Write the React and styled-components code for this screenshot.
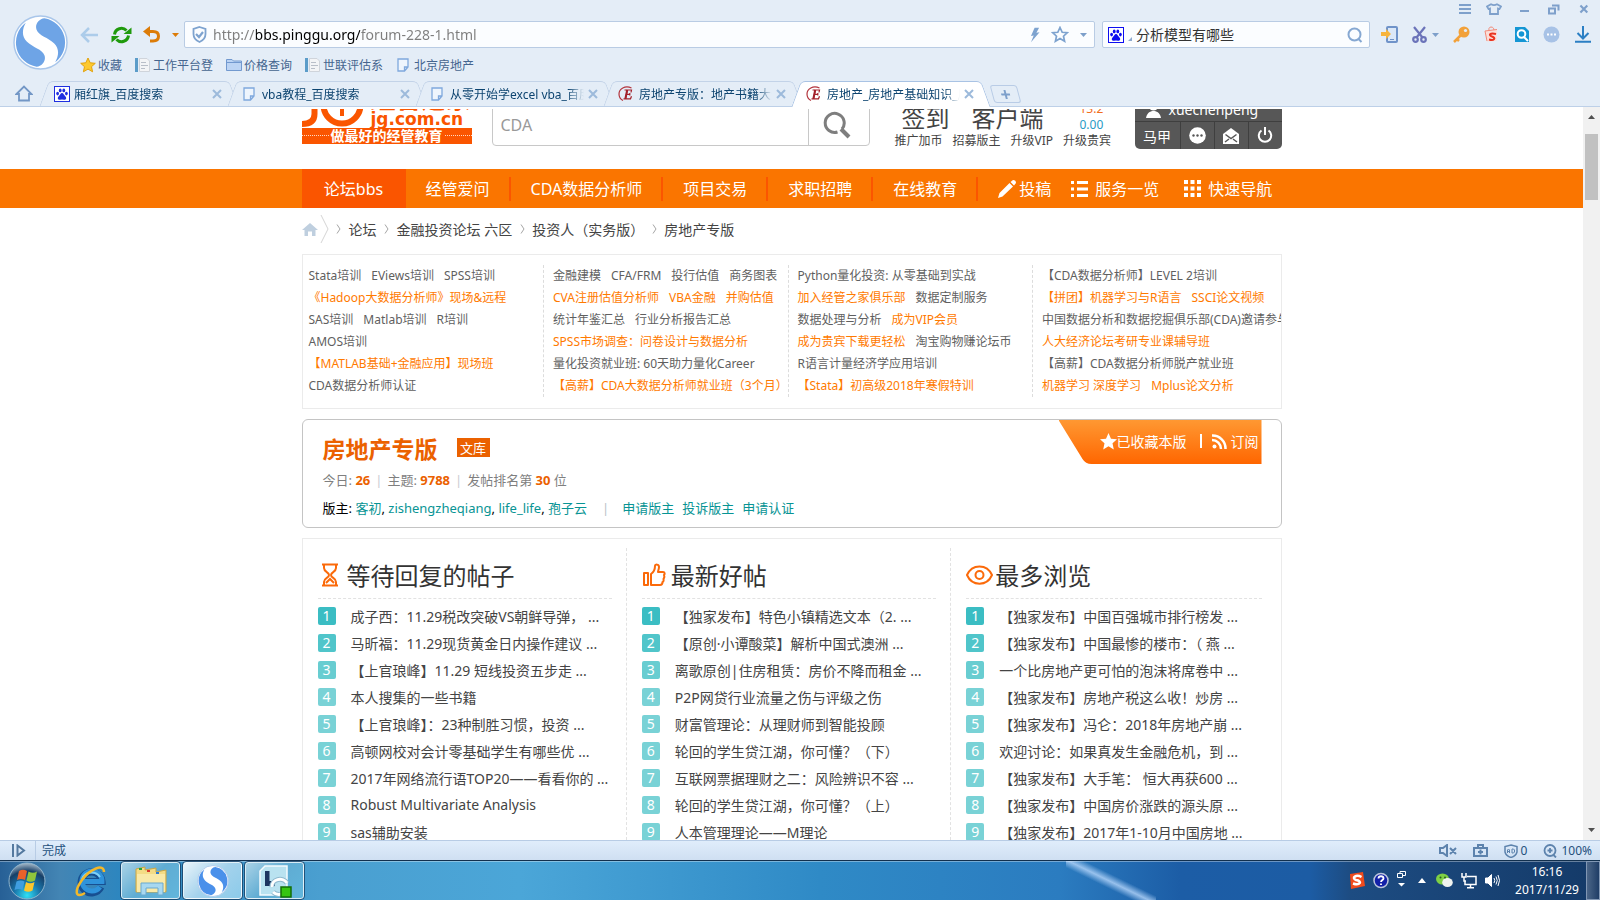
import React from "react";
import styled, { createGlobalStyle, css } from "styled-components";

const Global = createGlobalStyle`
  * { box-sizing: border-box; }
  body { margin: 0; font-family: "Noto Sans", "Noto Sans CJK SC", sans-serif; font-size: 12px; color: #444; }
  a { color: inherit; text-decoration: none; }
  button { border: 0; padding: 0; margin: 0; background: none; font: inherit; color: inherit; cursor: pointer; display: inline-flex; align-items: center; justify-content: center; }
  input { font: inherit; border: 0; padding: 0; margin: 0; outline: 0; background: none; min-width: 0; }
  ul, ol, h1, h2, p { margin: 0; padding: 0; list-style: none; font-weight: normal; }
  svg { display: block; flex: none; }
`;

/* ---------- window frame ---------- */
const Window = styled.div`
  height: 100vh;
  display: flex;
  flex-direction: column;
  overflow: hidden;
  background: #fff;
`;
const Chrome = styled.header`
  flex: none;
  display: flex;
  flex-direction: column;
  background: #e4edf7;
  border-bottom: 1px solid #bdd0e8;
  position: relative;
`;
const TitleRow = styled.div`
  height: 21px;
  display: flex;
  justify-content: flex-end;
  align-items: center;
  gap: 14px;
  padding: 0 8px 3px 0;
`;
const ChromeMain = styled.div`
  display: flex;
  padding-left: 13px;
`;
const BrandButton = styled.button`
  width: 55px;
  height: 56px;
  margin-top: -7px;
  margin-right: 12px;
`;
const ChromeRows = styled.div`
  flex: 1;
  min-width: 0;
`;
const AddressRow = styled.div`
  display: flex;
  align-items: center;
  height: 27px;
  padding-right: 8px;
`;
const NavButtons = styled.div`
  display: flex;
  align-items: center;
  width: 104px;
  gap: 11px;
`;
const Field = styled.form`
  display: flex;
  align-items: center;
  height: 27px;
  background: #fbfdff;
  border: 1px solid #b9cce4;
  border-radius: 2px;
  padding: 0 7px;
  gap: 6px;
  ${(p) => (p.$wide ? css`flex: 1; margin-right: 7px;` : css`width: 268px; padding: 0 6px 0 5px; gap: 4px; margin-right: 11px;`)}
`;
const FieldIcons = styled.span`
  display: flex;
  align-items: center;
  gap: 11px;
`;
const UrlInput = styled.input`
  flex: 1;
  font-size: 14px;
  line-height: 22px;
  color: transparent;
  background: linear-gradient(90deg, #7d7d7d 43px, #000 43px, #000 147px, #7d7d7d 147px);
  background-clip: text;
  -webkit-background-clip: text;
`;
const QueryInput = styled.input`
  flex: 1;
  font-size: 14px;
  line-height: 22px;
  color: #333;
`;
const Tools = styled.div`
  display: flex;
  align-items: center;
  justify-content: space-between;
  width: 211px;
`;
const ToolButton = styled.button`
  gap: 5px;
`;
const Bookmarks = styled.nav`
  display: flex;
  align-items: center;
  height: 33px;
  gap: 13px;
  color: #45658f;
`;
const Bookmark = styled.a`
  display: flex;
  align-items: center;
  gap: 2px;
`;
const TabBar = styled.div`
  display: flex;
  height: 25px;
`;
const HomeButton = styled.button`
  width: 22px;
  margin: 0 4px 0 13px;
`;
const Tab = styled.div`
  position: relative;
  z-index: 0;
  display: flex;
  align-items: center;
  width: 200px;
  height: 26px;
  padding: 0 17px 0 15px;
  gap: 4px;
  color: #0d4470;
  & + & { margin-left: -12px; }
  &::before, &::after {
    content: "";
    position: absolute;
    z-index: -1;
    top: 0;
    bottom: ${(p) => (p.$active ? "0" : "1px")};
    width: 51%;
    border: 1px solid ${(p) => (p.$active ? "#a9c3e4" : "#c3d3e8")};
    border-bottom: 0;
    background: ${(p) => (p.$active ? "#fff" : "#e4edf7")};
  }
  &::before { left: 5px; transform: skewX(-20deg); border-right: 0; border-top-left-radius: 5px; }
  &::after { right: 5px; transform: skewX(20deg); border-left: 0; border-top-right-radius: 5px; }
`;
const TabTitle = styled.a`
  flex: 1;
  overflow: hidden;
  white-space: nowrap;
  mask-image: linear-gradient(90deg, #000 88%, transparent);
`;
const NewTab = styled.button`
  width: 27px;
  height: 18px;
  margin: 4px 0 0 1px;
  border: 1px solid #b9cce6;
  border-radius: 3px;
  transform: skewX(15deg);
`;

/* ---------- page ---------- */
const Viewport = styled.div`
  flex: 1;
  min-height: 0;
  display: flex;
`;
const Page = styled.main`
  flex: 1;
  min-width: 0;
  overflow: hidden;
  padding-top: 2px;
`;
const Wrap = styled.div`
  width: 980px;
  max-width: 100%;
  margin: 0 auto;
`;
const SiteHeader = styled(Wrap)`
  display: flex;
  align-items: flex-end;
  height: 60px;
  padding-bottom: 20px;
  overflow: hidden;
`;
const Logo = styled.a`
  width: 170px;
  margin: 0 20px 5px 0;
  color: #fa5500;
`;
const LogoTop = styled.div`
  display: flex;
  align-items: flex-end;
  gap: 8px;
`;
const LogoWords = styled.div`
  font-size: 25px;
  line-height: 24px;
  font-weight: 900;
  white-space: nowrap;
`;
const LogoDomain = styled.div`
  font: bold 17px/18px "DejaVu Sans", sans-serif;
`;
const LogoSlogan = styled.div`
  display: flex;
  align-items: center;
  gap: 2px;
  height: 16px;
  padding-bottom: 2px;
  background: #fa5500;
  color: #fff;
  font-size: 14px;
  font-weight: bold;
  white-space: nowrap;
  &::before, &::after { content: ""; flex: 1; border-top: 1px dotted #ffd9c2; }
`;
const SiteSearch = styled.form`
  display: flex;
  width: 378px;
  height: 42px;
  margin: 0 25px 3px 0;
  border: 1px solid #c8c8c8;
  border-radius: 4px;
  input { flex: 1; padding-left: 8px; font-size: 16px; color: #888; }
  input::placeholder { color: #999; opacity: 1; }
  button { width: 61px; padding-right: 4px; border-left: 1px solid #c8c8c8; }
`;
const Quick = styled.div`
  flex: 1;
  color: #444;
  white-space: nowrap;
`;
const QuickTop = styled.div`
  display: flex;
  align-items: flex-end;
  gap: 22px;
  padding-left: 7px;
  font-size: 24px;
  line-height: 30px;
`;
const Balance = styled.div`
  margin-left: 14px;
  font-size: 12px;
  line-height: 16px;
  color: #2a9ac6;
  span { display: block; color: #f26c1c; }
`;
const QuickLinks = styled.div`
  display: flex;
  gap: 10px;
  line-height: 16px;
`;
const UserPanel = styled.div`
  width: 147px;
  background: #575757;
  color: #fff;
  border-radius: 5px;
  font-size: 14px;
`;
const UserName = styled.a`
  display: flex;
  align-items: center;
  gap: 8px;
  height: 25px;
  padding-left: 11px;
  border-bottom: 1px solid #3f3f3f;
`;
const UserActions = styled.div`
  display: flex;
  height: 27px;
  button { flex: 1; }
  button:first-child { flex: 0 0 45px; }
  button + button { border-left: 1px solid #3f3f3f; }
`;
const NavBar = styled.nav`
  background: #fa7500;
  color: #fff;
  font-size: 16px;
  white-space: nowrap;
`;
const NavInner = styled(Wrap)`
  display: flex;
  align-items: center;
  height: 39px;
`;
const NavItem = styled.a`
  display: flex;
  align-items: center;
  gap: ${(p) => (p.$gap ? p.$gap : 3)}px;
  ${(p) => p.$kind === "active" && css`align-self: stretch; width: 104px; padding-bottom: 2px; justify-content: center; background: #fa5500;`}
  ${(p) => p.$kind === "text" && css`padding: 0 19px 0 18px; border-right: 2px solid #fb5500; line-height: 24px; & + & { padding-left: 20px; }`}
  ${(p) => p.$kind === "icon" && css`padding-left: 20px; line-height: 24px;`}
`;
const Crumbs = styled(Wrap)`
  display: flex;
  align-items: center;
  height: 46px;
  padding-bottom: 4px;
  font-size: 14px;
  white-space: nowrap;
`;
const CrumbMark = styled.span`
  display: flex;
  justify-content: center;
  width: 20px;
`;
const LinkBoard = styled(Wrap)`
  display: grid;
  grid-template-columns: repeat(4, minmax(0, 1fr));
  border: 1px solid #ebebeb;
  padding: 10px 0 11px;
  margin-bottom: 10px;
`;
const LinkColumn = styled.ul`
  padding-left: 6px;
  line-height: 22px;
  overflow: hidden;
  white-space: nowrap;
  &:not(:last-child) { margin-right: 3px; border-right: 1px dashed #dcdcdc; }
  li { display: flex; gap: 10px; height: 22px; }
`;
const BoardLink = styled.a`
  color: ${(p) => (p.$hot ? "#ff7a00" : "#5f5f5f")};
`;
const ForumCard = styled(Wrap)`
  display: flex;
  justify-content: space-between;
  border: 1px solid #c4c4c4;
  border-radius: 6px;
  height: 109px;
  padding: 0 19px 0 20px;
  margin-bottom: 10px;
  font-size: 13px;
`;
const ForumTitle = styled.div`
  display: flex;
  align-items: center;
  gap: 19px;
  height: 34px;
  margin-top: 13px;
  padding-bottom: 5px;
  color: #eb6100;
  h1 { font-size: 23px; font-weight: bold; }
`;
const Badge = styled.a`
  display: flex;
  align-items: center;
  justify-content: center;
  width: 33px;
  height: 19px;
  background: #eb6100;
  color: #fff;
`;
const Stats = styled.p`
  height: 27px;
  line-height: 27px;
  color: #7f7f7f;
  b { color: #eb6100; }
  i { font-style: normal; color: #c9ccd2; margin: 0 5px; }
`;
const Moderators = styled.p`
  display: flex;
  gap: 8px;
  height: 27px;
  line-height: 28px;
  color: #000;
  a { color: #089494; }
  i { font-style: normal; color: #b9bfc9; margin: 0 5px 0 7px; }
`;
const Ribbon = styled.div`
  display: flex;
  align-items: center;
  width: 203px;
  height: 44px;
  padding: 0 0 2px 41px;
  font-size: 14px;
  color: #fff;
  white-space: nowrap;
  background: linear-gradient(#ff9832, #ff6600);
  clip-path: path("M0 0H203V44H33Q27 44 24 39Z");
  a { display: flex; align-items: center; }
  a + a { margin-left: 13px; gap: 4px; }
  a + a::before { content: ""; width: 2px; height: 14px; margin-right: 6px; background: #fff; }
`;
const Threads = styled(Wrap)`
  display: grid;
  grid-template-columns: repeat(3, minmax(0, 1fr));
  border: 1px solid #ebebeb;
  padding: 9px 5px 9px 0;
`;
const ThreadColumn = styled.section`
  padding: 11px 14px 0 15px;
  &:not(:last-child) { border-right: 1px dashed #e2e2e2; }
`;
const ThreadHeading = styled.h2`
  display: flex;
  align-items: center;
  height: 40px;
  padding-bottom: 8px;
  font-size: 24px;
  color: #333;
  border-bottom: 1px dashed #e2e2e2;
  margin-bottom: 3px;
  svg { margin-right: 2px; }
`;
const ThreadRow = styled.li`
  display: flex;
  align-items: center;
  gap: 15px;
  height: 27px;
  font-size: 14px;
  color: #444;
  white-space: nowrap;
`;
const Rank = styled.span`
  width: 18px;
  height: 18px;
  line-height: 17px;
  border-radius: 2px;
  text-align: center;
  color: #fff;
  background: ${(p) => ["#3bbdc3", "#50c5ca", "#68cdd1"][p.$n - 1] || "#79d2d6"};
`;
const ScrollTrack = styled.div`
  width: 17px;
  display: flex;
  flex-direction: column;
  align-items: center;
  background: #f1f1f1;
  button { width: 17px; height: 20px; }
  button:last-child { margin-top: auto; }
`;
const ScrollThumb = styled.div`
  width: 13px;
  height: 66px;
  margin-top: 7px;
  background: #c1c1c1;
`;

/* ---------- status bar and taskbar ---------- */
const StatusBar = styled.footer`
  flex: none;
  display: flex;
  align-items: center;
  height: 20px;
  padding: 0 8px 0 12px;
  border-top: 1px solid #b8cce5;
  background: linear-gradient(#e0edfb, #cfdff2);
  color: #24507c;
`;
const StatusText = styled.span`
  margin-left: 9px;
  padding-left: 6px;
  border-left: 1px solid #b8cce5;
  line-height: 19px;
  flex: 1;
`;
const StatusItem = styled.button`
  gap: 3px;
  margin-left: 16px;
  line-height: 17px;
`;
const Taskbar = styled.footer`
  flex: none;
  display: flex;
  align-items: stretch;
  height: 40px;
  border-top: 1px solid #12304e;
  box-shadow: inset 0 1px 0 rgba(255, 255, 255, 0.35);
  background:
    linear-gradient(26deg, transparent 30px, rgba(190, 220, 255, 0.75) 37px, transparent 44px) 1066px 0 / 90px 40px no-repeat,
    linear-gradient(90deg, #276096 0, #4385b4 60px, #2d86bf 120px, #4a9fd0 320px, #4ba6d8 520px, #2f8ac6 820px, #2b7cc0 1060px, #1c5da6 1180px, #1c5ca4 1310px, #1d4c82 1350px, #143a68 100%);
`;
const StartButton = styled.button`
  width: 54px;
`;
const TaskIcon = styled.button`
  width: 72px;
  margin-right: -5px;
`;
const TaskButton = styled.button`
  width: 59px;
  margin: 1px 3px 1px 0;
  border: 1px solid rgba(255, 255, 255, 0.75);
  border-radius: 3px;
  outline: 1px solid rgba(15, 50, 85, 0.7);
  background: ${(p) => (p.$active ? "linear-gradient(135deg, #e9f4fb, #a4d2ec 50%, #8ccbea)" : "linear-gradient(135deg, #a9d2e6, #5facd3 50%, #62b6dc)")};
`;
const Tray = styled.div`
  display: flex;
  align-items: center;
  gap: 8px;
  margin-left: auto;
  color: #fff;
`;
const Clock = styled.time`
  width: 78px;
  text-align: center;
  font-size: 12px;
  line-height: 18px;
`;
const PeekButton = styled.button`
  width: 14px;
  border: 1px solid #8197b4;
  background: linear-gradient(90deg, #4b6688, #1f3d66);
`;

/* ---------- icons ---------- */
const line = { fill: "none", stroke: "currentColor", strokeWidth: 2 };

const SwirlLogo = ({ size, blue }) => (
  <svg width={size} height={size} viewBox="-28 -28 56 56">
    <circle r="27" fill="#fff" stroke="#a9c6ea" strokeWidth="1.5" />
    <circle r="25" fill="#fff" />
    {[0, 180].map((a) => (
      <path key={a} transform={`rotate(${a})`} fill={blue} d="M4-24.700C-2-24-6-18-4-13C-2-7 8-5 14 1C19 6 19 13 15 20A25 25 0 0 0 4-24.700Z" />
    ))}
  </svg>
);
const Paw = ({ c = "#1f2fe0" }) => (
  <svg width="16" height="16" viewBox="0 0 16 16">
    <rect x=".5" y=".5" width="15" height="15" fill="#fff" stroke={c} />
    <g fill={c}>
      <ellipse cx="3.6" cy="7.6" rx="1.4" ry="1.8" /><ellipse cx="6.2" cy="4.4" rx="1.4" ry="1.9" />
      <ellipse cx="9.8" cy="4.4" rx="1.4" ry="1.9" /><ellipse cx="12.4" cy="7.6" rx="1.4" ry="1.8" />
      <path d="M8 7C6.600 7 6 9 4.700 10.200C3 12 4 14 6 13.700Q8 13.200 10 13.700C12 14 13 12 11.300 10.200C10 9 9.400 7 8 7Z" />
    </g>
  </svg>
);
const PageIcon = () => (
  <svg width="16" height="16" viewBox="-1 0 16 16" fill="#eef5fd" stroke="#7fa8dd" strokeWidth="1.3"><path d="M1 2H11V10L7.500 14H1ZM11 10H7.500V14" /></svg>
);
const DocIcon = () => (
  <svg width="16" height="16" viewBox="0 0 16 16"><path fill="#f3f4f6" stroke="#cfd4db" d="M4.500 1.500H12L14.500 4V14.500H4.500Z" /><path fill="#5b9cc9" d="M0 1H3V15H0Z" /><path stroke="#b8bec8" d="M6 5.500H11M6 8.500H13M6 11.500H10" /></svg>
);
const FolderIcon = () => (
  <svg width="16" height="14" viewBox="0 0 16 14" fill="#bcd4f4" stroke="#7299cf"><path d="M.5 12.500V1.500H6L7.500 3H15.500V12.500ZM.5 4.500H15" /></svg>
);
const StarIcon = () => (
  <svg width="16" height="16" viewBox="0 0 16 16"><path fill="#fdc92e" stroke="#e2a20d" d="M8 1L10.200 5.800L15.300 6.300L11.500 9.700L12.600 14.800L8 12.100L3.400 14.800L4.500 9.700L.7 6.300L5.800 5.800Z" /></svg>
);
const EIcon = () => (
  <svg width="17" height="16" viewBox="0 0 17 16"><path d="M13.500 2C7-1 1 3 1 8Q1 12.500 5 14.500" fill="none" stroke="#b3343c" strokeWidth="1.2" /><path d="M6.500 4H13.500L13 6.500M5.500 12.800H12.500L13.500 10.300M9.300 4L7.500 12.800M8.500 8.300H11.500M11.800 7V9.600" fill="none" stroke="#a3202a" strokeWidth="1.200" /><path d="M9.200 4L7.400 12.800" stroke="#a3202a" strokeWidth="2" /></svg>
);
const CloseIcon = ({ c = "#9dbadb" }) => (
  <svg width="10" height="10" viewBox="0 0 10 10" stroke={c} strokeWidth="2"><path d="M1 1L9 9M9 1L1 9" /></svg>
);
const Caret = ({ c = "#7d9fca" }) => <svg width="7" height="4" viewBox="0 0 7 4"><path fill={c} d="M0 0H7L3.500 4Z" /></svg>;

/* ---------- data ---------- */
const bookmarks = [[StarIcon, "收藏"], [DocIcon, "工作平台登"], [FolderIcon, "价格查询"], [DocIcon, "世联评估系"], [PageIcon, "北京房地产"]];
const tabs = [[Paw, "厢红旗_百度搜索"], [PageIcon, "vba教程_百度搜索"], [PageIcon, "从零开始学excel vba_百度搜索"], [EIcon, "房地产专版：地产书籍大全"], [EIcon, "房地产_房地产基础知识_房"]];
const navItems = ["经管爱问", "CDA数据分析师", "项目交易", "求职招聘", "在线教育"];
/* a leading asterisk marks a highlighted link */
const board = [
  [["Stata培训", "EViews培训", "SPSS培训"], ["*《Hadoop大数据分析师》现场&远程"], ["SAS培训", "Matlab培训", "R培训"], ["AMOS培训"], ["*【MATLAB基础+金融应用】现场班"], ["CDA数据分析师认证"]],
  [["金融建模", "CFA/FRM", "投行估值", "商务图表"], ["*CVA注册估值分析师", "*VBA金融", "*并购估值"], ["统计年鉴汇总", "行业分析报告汇总"], ["*SPSS市场调查：问卷设计与数据分析"], ["量化投资就业班: 60天助力量化Career"], ["*【高薪】CDA大数据分析师就业班（3个月）"]],
  [["Python量化投资: 从零基础到实战"], ["*加入经管之家俱乐部", "数据定制服务"], ["数据处理与分析", "*成为VIP会员"], ["*成为贵宾下载更轻松", "淘宝购物赚论坛币"], ["R语言计量经济学应用培训"], ["*【Stata】初高级2018年寒假特训"]],
  [["【CDA数据分析师】LEVEL 2培训"], ["*【拼团】机器学习与R语言", "*SSCI论文视频"], ["中国数据分析和数据挖掘俱乐部(CDA)邀请参与"], ["*人大经济论坛考研专业课辅导班"], ["【高薪】CDA数据分析师脱产就业班"], ["*机器学习 深度学习", "*Mplus论文分析"]],
];
const Hourglass = () => (
  <svg width="27" height="24" viewBox="0 0 27 24" fill="none" stroke="#fb6a0a" strokeWidth="2"><path d="M4 1.500H20M4 22.500H20M6 2V5C6 9 11 9 11 12S6 15 6 19V22M18 2V5C18 9 13 9 13 12S18 15 18 19V22M8 20L12 16L16 20" /></svg>
);
const Thumb = () => (
  <svg width="27" height="24" viewBox="0 0 27 24" fill="none" stroke="#fb6a0a" strokeWidth="2" strokeLinejoin="round"><path d="M2 10H6V22H2ZM9 11C12 9 13 6 13 3C13 1 17 1 17 4C17 6 16 8 16 9H21C23 9 23 11 22 12C23 14 22 15 21.500 16C22 18 21 19 20.500 19C20.500 21 20 22 18 22H9Z" /></svg>
);
const Eye = () => (
  <svg width="27" height="24" viewBox="0 0 27 24" fill="none" stroke="#fb6a0a" strokeWidth="2"><path d="M1 12C6 .5 21 .5 26 12C21 23.500 6 23.500 1 12Z" /><circle cx="13.500" cy="12" r="4" /></svg>
);
const threads = [
  [Hourglass, "等待回复的帖子", ["成子西：11.29税改突破VS朝鲜导弹， ...", "马昕福：11.29现货黄金日内操作建议 ...", "【上官琅峰】11.29 短线投资五步走 ...", "本人搜集的一些书籍", "【上官琅峰】：23种制胜习惯，投资 ...", "高顿网校对会计零基础学生有哪些优 ...", "2017年网络流行语TOP20——看看你的 ...", "Robust Multivariate Analysis", "sas辅助安装"]],
  [Thumb, "最新好帖", ["【独家发布】特色小镇精选文本（2. ...", "【原创·小谭酸菜】解析中国式澳洲 ...", "离歌原创|住房租赁：房价不降而租金 ...", "P2P网贷行业流量之伤与评级之伤", "财富管理论：从理财师到智能投顾", "轮回的学生贷江湖，你可懂？（下）", "互联网票据理财之二：风险辨识不容 ...", "轮回的学生贷江湖，你可懂？（上）", "人本管理理论——M理论"]],
  [Eye, "最多浏览", ["【独家发布】中国百强城市排行榜发 ...", "【独家发布】中国最惨的楼市：（ 燕 ...", "一个比房地产更可怕的泡沫将席卷中 ...", "【独家发布】房地产税这么收！炒房 ...", "【独家发布】冯仑：2018年房地产崩 ...", "欢迎讨论：如果真发生金融危机，到 ...", "【独家发布】大手笔： 恒大再获600 ...", "【独家发布】中国房价涨跌的源头原 ...", "【独家发布】2017年1-10月中国房地 ..."]],
];

function BrowserChrome() {
  return (
    <Chrome>
      <TitleRow>
        <button aria-label="菜单"><svg width="14" height="12" viewBox="0 0 14 12" stroke="#7ea0cb" strokeWidth="2"><path d="M1 2H13M1 6H13M1 10H13" /></svg></button>
        <button aria-label="皮肤"><svg width="16" height="12" viewBox="0 0 16 12" fill="none" stroke="#7ea0cb" strokeWidth="1.8"><path d="M5 1.200Q8 3 11 1.200L15 3.500L13.500 6L12 5.500V11H4V5.500L2.500 6L1 3.500Z" /></svg></button>
        <button aria-label="最小化"><svg width="18" height="12" viewBox="0 0 18 12" stroke="#7ea0cb" strokeWidth="2"><path d="M4 8H13" /></svg></button>
        <button aria-label="还原"><svg width="12" height="12" viewBox="0 0 12 12" fill="none" stroke="#7ea0cb" strokeWidth="2"><path d="M1 5.500H7V10.500H1ZM4 2.500H10.500V7.500" /></svg></button>
        <button aria-label="关闭"><svg width="18" height="12" viewBox="-6 -2 18 14" stroke="#7ea0cb" strokeWidth="2.500"><path d="M0 1L8 9M8 1L0 9" /></svg></button>
      </TitleRow>
      <ChromeMain>
        <BrandButton aria-label="浏览器"><SwirlLogo size={55} blue="#6ea4e6" /></BrandButton>
        <ChromeRows>
          <AddressRow>
            <NavButtons>
              <button aria-label="后退"><svg width="20" height="18" viewBox="0 0 20 18" fill="none" stroke="#acccea" strokeWidth="2.500"><path d="M9 2L2 9L9 16M2 9H18" /></svg></button>
              <button aria-label="刷新"><svg width="21" height="20" viewBox="0 0 21 20"><path d="M3.500 9.500A7 7 0 0 1 15.500 5.500M17.500 10.500A7 7 0 0 1 5.500 14.500" fill="none" stroke="#1f9a0c" strokeWidth="3" /><path fill="#1f9a0c" d="M12.500 9H20.500V2.500ZM8.500 11H.5V17.500Z" /></svg></button>
              <button aria-label="撤销"><svg width="18" height="18" viewBox="0 0 18 18"><path d="M5 5.500H10Q15.500 5.500 15.500 10.200T10 15H7" fill="none" stroke="#dc7c08" strokeWidth="3" /><path fill="#dc7c08" d="M7 0V11L0 5.500Z" /></svg></button>
              <Caret c="#dc7c08" />
            </NavButtons>
            <Field $wide>
              <svg width="15" height="17" viewBox="0 0 15 17" fill="none" stroke="#7ea3cf" strokeWidth="1.800"><path d="M7.500 1L13.500 3V8C13.500 12 11 14.500 7.500 16C4 14.500 1.500 12 1.500 8V3Z" /><path d="M4 8L7 11L11 6" strokeWidth="2.200" /></svg>
              <UrlInput aria-label="地址" defaultValue="http://bbs.pinggu.org/forum-228-1.html" />
              <FieldIcons>
                <svg width="9" height="16" viewBox="1 0 10 16" fill="#7ea3cf"><path d="M5 0H10L7 5.500L10.500 5L1 16L4 8.500L1 9Z" /></svg>
                <svg width="18" height="17" viewBox="0 0 18 17" fill="none" stroke="#7ea3cf" strokeWidth="1.700"><path d="M9 1.500L11.200 6.300L16.300 6.700L12.500 10.200L13.600 15.300L9 12.600L4.400 15.300L5.500 10.200L1.700 6.700L6.800 6.300Z" /></svg>
                <Caret />
              </FieldIcons>
            </Field>
            <Field>
              <Paw c="#0d0df0" />
              <svg width="4" height="12" viewBox="0 0 4 12"><path fill="#8da9cf" d="M4 8V12H0Z" /></svg>
              <QueryInput aria-label="搜索" defaultValue="分析模型有哪些" />
              <svg width="16" height="16" viewBox="0 0 16 16" fill="none" stroke="#86a8d2" strokeWidth="2"><circle cx="7.500" cy="7.500" r="6" /><path d="M11.500 12L14.500 15" /></svg>
            </Field>
            <Tools>
              <ToolButton aria-label="手机"><svg width="17" height="17" viewBox="0 0 17 17"><rect x="6" y="1" width="10" height="15" rx="1" fill="#dbe8f8" stroke="#6f93c9" strokeWidth="2" /><path d="M9 13.500H13" stroke="#6f93c9" /><path fill="#f7b43c" d="M0 6H5V3L10 8L5 13V10H0Z" /></svg></ToolButton>
              <ToolButton aria-label="截图"><svg width="15" height="17" viewBox="0 0 15 17" fill="none" stroke="#6b73b9" strokeWidth="2.200"><path d="M2 1L10.500 11.500M13 1L4.500 11.500" /><circle cx="3.500" cy="13.500" r="2.300" /><circle cx="11.500" cy="13.500" r="2.300" /></svg><Caret /></ToolButton>
              <ToolButton aria-label="密码"><svg width="17" height="17" viewBox="0 0 17 17"><circle cx="11" cy="6" r="5.500" fill="#f2a13a" /><circle cx="12.500" cy="4.500" r="1.600" fill="#e4edf7" /><path d="M8 9L1 16M4 13L6 15" stroke="#f2a13a" strokeWidth="2.500" /></svg></ToolButton>
              <ToolButton aria-label="购物"><svg width="15" height="17" viewBox="0 0 15 17" fill="none" stroke="#f28a78"><path d="M5 4C4 0 10 0 10 4" /><path fill="#fbded8" stroke="none" d="M1 5L13 3.500L12.500 15L3 15.500Z" /><path d="M1 5L13 3.500M1 5L3 15" /><path d="M12 8C6 6.500 4 9 8 10.500C12.500 12 10 15 5 13.500" stroke="#ea3420" strokeWidth="2" /></svg></ToolButton>
              <ToolButton aria-label="识图"><svg width="15" height="17" viewBox="0 0 15 17"><path fill="#1496d4" d="M1 1H11L15 5V16H1Z" /><circle cx="7.500" cy="8" r="3.800" fill="none" stroke="#fff" strokeWidth="2" /><path d="M10 11L14 15" stroke="#fff" strokeWidth="2" /></svg></ToolButton>
              <ToolButton aria-label="更多"><svg width="17" height="17" viewBox="0 0 17 17"><circle cx="8.500" cy="8.500" r="8" fill="#a7c2e6" /><path d="M4 8.500H6M7.500 8.500H9.500M11 8.500H13" stroke="#fff" strokeWidth="2" /></svg></ToolButton>
              <ToolButton aria-label="下载"><svg width="18" height="17" viewBox="0 0 18 17" fill="none" stroke="#2b7fc4" strokeWidth="2"><path d="M9 0V12M3.500 7L9 12.500L14.500 7M1 15.800H17" /></svg></ToolButton>
            </Tools>
          </AddressRow>
          <Bookmarks>
            {bookmarks.map(([Icon, label], i) => <Bookmark key={i} href="#"><Icon />{label}</Bookmark>)}
          </Bookmarks>
        </ChromeRows>
      </ChromeMain>
      <TabBar>
        <HomeButton aria-label="主页"><svg width="18" height="17" viewBox="0 0 18 17" fill="none" stroke="#7397c6" strokeWidth="1.800"><path d="M1.500 9L9 1.500L16.500 9H14V15.500H4V9Z" /></svg></HomeButton>
        {tabs.map(([Icon, title], i) => (
          <Tab key={i} $active={i === 4}><Icon /><TabTitle href="#">{title}</TabTitle><button aria-label="关闭标签"><CloseIcon /></button></Tab>
        ))}
        <NewTab aria-label="新标签"><svg width="9" height="9" viewBox="0 0 9 9" stroke="#7ea0cb" strokeWidth="2"><path d="M4.500 0V9M0 4.500H9" /></svg></NewTab>
      </TabBar>
    </Chrome>
  );
}

function Header() {
  return (
    <SiteHeader as="header">
      <Logo href="#">
        <LogoTop>
          <svg width="61" height="42" viewBox="0 0 61 42" fill="none" stroke="#fa5500" strokeWidth="6"><path d="M12.500 0V28Q12.500 38 0 38" /><circle cx="40" cy="19" r="18.500" /><path d="M40 8V30M29 19H51" strokeWidth="4" /></svg>
          <div><LogoWords>经管之家</LogoWords><LogoDomain>jg.com.cn</LogoDomain></div>
        </LogoTop>
        <LogoSlogan>做最好的经管教育</LogoSlogan>
      </Logo>
      <SiteSearch>
        <input aria-label="站内搜索" placeholder="CDA" />
        <button aria-label="搜索"><svg width="28" height="28" viewBox="0 0 28 28" fill="none" stroke="#7e7e7e" strokeWidth="3"><path d="M14.500 21A9.500 9.500 0 1 1 19 18" /><path d="M18 18L26 26" strokeWidth="4" /></svg></button>
      </SiteSearch>
      <Quick>
        <QuickTop><a href="#">签到</a><a href="#">客户端</a><Balance><span>13.2</span>0.00</Balance></QuickTop>
        <QuickLinks><a href="#">推广加币</a><a href="#">招募版主</a><a href="#">升级VIP</a><a href="#">升级贵宾</a></QuickLinks>
      </Quick>
      <UserPanel>
        <UserName href="#"><svg width="15" height="18" viewBox="0 0 15 18" fill="#fff"><circle cx="7.500" cy="6" r="4.500" /><path d="M0 18C1 12 5 11 7.500 11S14 12 15 18Z" /></svg>xuechenpeng</UserName>
        <UserActions>
          <button>马甲</button>
          <button aria-label="消息"><svg width="17" height="17" viewBox="0 0 17 17"><circle cx="8.500" cy="8.500" r="8.300" fill="#fff" /><g fill="#575757"><circle cx="4.500" cy="8.500" r="1.200" /><circle cx="8.500" cy="8.500" r="1.200" /><circle cx="12.500" cy="8.500" r="1.200" /></g></svg></button>
          <button aria-label="邮件"><svg width="16" height="16" viewBox="0 0 16 16"><path fill="#fff" d="M0 6L8 0L16 6V16H0Z" /><path d="M2.500 6.500L8 10.500L13.500 6.500M2 14L6 11M14 14L10 11" fill="none" stroke="#575757" strokeWidth="1.500" /></svg></button>
          <button aria-label="退出"><svg width="16" height="17" viewBox="0 0 16 17" {...line}><path d="M4.500 3.500A6.200 6.200 0 1 0 11.500 3.500M8 0V8" /></svg></button>
        </UserActions>
      </UserPanel>
    </SiteHeader>
  );
}

function ForumPage() {
  return (
    <Page>
      <Header />
      <NavBar>
        <NavInner>
          <NavItem href="#" $kind="active">论坛bbs</NavItem>
          {navItems.map((t) => <NavItem key={t} href="#" $kind="text">{t}</NavItem>)}
          <NavItem href="#" $kind="icon"><svg width="18" height="18" viewBox="0 0 18 18" fill="#fff"><path d="M15 0Q18 0 18 3L16 5.500L12.500 2ZM11.500 3L15 6.500L4.500 16.500L0 18L1.500 13Z" /></svg>投稿</NavItem>
          <NavItem href="#" $kind="icon" $gap={7}><svg width="17" height="16" viewBox="0 0 17 16" stroke="#fff" strokeWidth="3"><path d="M0 1.500H3M6 1.500H17M0 8H3M6 8H17M0 14.500H3M6 14.500H17" /></svg>服务一览</NavItem>
          <NavItem href="#" $kind="icon" $gap={7}><svg width="22" height="17" viewBox="-5 0 22 17" stroke="#fff" strokeWidth="4"><path d="M0 2H4M6.500 2H10.500M13 2H17M0 8.500H4M6.500 8.500H10.500M13 8.500H17M0 15H4M6.500 15H10.500M13 15H17" /></svg>快速导航</NavItem>
        </NavInner>
      </NavBar>
      <Crumbs as="nav">
        <a href="#" aria-label="首页"><svg width="16" height="13" viewBox="0 0 16 13" fill="#bfcfdf"><path d="M8 0L16 7H13.500V13H10V8.500H6V13H2.500V7H0Z" /></svg></a>
        <svg width="11" height="30" viewBox="0 0 11 30" fill="none" stroke="#d5d5d5"><path d="M3 1L10 15L3 29" /></svg>
        {["论坛", "金融投资论坛 六区", "投资人（实务版）", "房地产专版"].map((t) => (
          <React.Fragment key={t}>
            <CrumbMark><svg width="5" height="10" viewBox="0 0 5 10" fill="none" stroke="#a5a5a5"><path d="M1 .5L4 5L1 9.500" /></svg></CrumbMark>
            <a href="#">{t}</a>
          </React.Fragment>
        ))}
      </Crumbs>
      <LinkBoard>
        {board.map((rows, i) => (
          <LinkColumn key={i}>
            {rows.map((row, j) => (
              <li key={j}>{row.map((t) => <BoardLink key={t} href="#" $hot={t[0] === "*"}>{t.replace("*", "")}</BoardLink>)}</li>
            ))}
          </LinkColumn>
        ))}
      </LinkBoard>
      <ForumCard>
        <div>
          <ForumTitle><h1>房地产专版</h1><Badge href="#">文库</Badge></ForumTitle>
          <Stats>今日: <b>26</b><i>|</i>主题: <b>9788</b><i>|</i>发帖排名第 <b>30</b> 位</Stats>
          <Moderators>
            <span>版主: <a href="#">客初</a>, <a href="#">zishengzheqiang</a>, <a href="#">life_life</a>, <a href="#">孢子云</a></span>
            <i>|</i><a href="#">申请版主</a><a href="#">投诉版主</a><a href="#">申请认证</a>
          </Moderators>
        </div>
        <Ribbon>
          <a href="#"><svg width="17" height="17" viewBox="0 0 17 17" fill="#fff"><path d="M8.500 0L11 5.700L17 6.300L12.500 10.300L13.800 16.500L8.500 13.300L3.200 16.500L4.500 10.300L0 6.300L6 5.700Z" /></svg>已收藏本版</a>
          <a href="#"><svg width="15" height="15" viewBox="0 0 15 15" fill="none" stroke="#fff" strokeWidth="2.500"><circle cx="2.500" cy="12.500" r="2" fill="#fff" stroke="none" /><path d="M0 6A9 9 0 0 1 9 15M0 1.500A13 13 0 0 1 13.500 15" /></svg>订阅</a>
        </Ribbon>
      </ForumCard>
      <Threads>
        {threads.map(([Icon, title, rows]) => (
          <ThreadColumn key={title}>
            <ThreadHeading><Icon />{title}</ThreadHeading>
            <ol>{rows.map((t, i) => <ThreadRow key={i}><Rank $n={i + 1}>{i + 1}</Rank><a href="#">{t}</a></ThreadRow>)}</ol>
          </ThreadColumn>
        ))}
      </Threads>
    </Page>
  );
}

function Bars() {
  return (
    <>
      <StatusBar>
        <svg width="14" height="13" viewBox="0 0 14 13" fill="none" stroke="#54799f" strokeWidth="2"><path d="M1 0V13M5.500 1.500L12 6.500L5.500 11.500Z" /></svg>
        <StatusText>完成</StatusText>
        <StatusItem aria-label="静音"><svg width="18" height="13" viewBox="0 0 18 13" fill="none" stroke="#5d83ad" strokeWidth="2"><path d="M1 4H4L8 1V12L4 9H1ZM11 4L17 10M17 4L11 10" /></svg></StatusItem>
        <StatusItem aria-label="修复"><svg width="15" height="13" viewBox="0 0 15 13" fill="none" stroke="#5d83ad" strokeWidth="2"><path d="M1 4H14V12H1ZM5 4V1H10V4M7.500 5.500V10.500M5 8H10" /></svg></StatusItem>
        <StatusItem><svg width="14" height="14" viewBox="0 0 14 14" fill="none" stroke="#5d83ad" strokeWidth="1.500"><path d="M7 1L13 2.500V8Q12 12 7 13.500Q2 12 1 8V2.500Z" /><path d="M3.500 9V6L4.500 5L5.500 6V9M3.500 7.500H5.500M8 5V9H9.500L10.500 8V6L9.500 5Z" strokeWidth="1" /></svg>0</StatusItem>
        <StatusItem><svg width="15" height="14" viewBox="0 0 15 14" fill="none" stroke="#5d83ad" strokeWidth="1.800"><circle cx="7" cy="6.500" r="5.500" /><path d="M7 4V9M4.500 6.500H9.500M10.500 11L13 13.500" /></svg>100%</StatusItem>
      </StatusBar>
      <Taskbar>
        <StartButton aria-label="开始">
          <svg width="38" height="38" viewBox="0 0 38 38">
            <defs><radialGradient id="orb" cx=".5" cy=".9" r=".9"><stop offset="0" stopColor="#2fe0f5" /><stop offset=".4" stopColor="#1976ab" /><stop offset=".75" stopColor="#173f67" /><stop offset="1" stopColor="#a9bccb" /></radialGradient></defs>
            <circle cx="19" cy="19" r="18" fill="url(#orb)" stroke="#8fb4cc" />
            <path fill="#e8622a" d="M11 9Q15 6.500 19 9L17 18Q13 16 9 18Z" /><path fill="#8fc43c" d="M20.500 9.500Q25 12 29 9.500L27 18.500Q22.500 21 18.500 18.500Z" />
            <path fill="#3f9ee0" d="M8.500 19.500Q12.500 17.500 16.500 19.500L14.500 28Q10.500 26 6.500 28Z" /><path fill="#fbc62d" d="M18 20Q22 22.500 26.500 20L24.500 28.500Q20 31 16 28.500Z" />
          </svg>
        </StartButton>
        <TaskIcon aria-label="Internet Explorer">
          <svg width="34" height="34" viewBox="0 0 34 34" fill="none"><path d="M28 23A10.500 10.500 0 1 1 29 17.500H10" stroke="#174f91" strokeWidth="7" /><path d="M27 23A10 10 0 1 1 29 17.500H10" stroke="#2f93db" strokeWidth="5" /><path d="M9 15A10 9.500 0 0 1 27 13" stroke="#7fd0f7" strokeWidth="2" /><path d="M31 8C31-1 17 5 9 16C1 27 2 35 12 29" stroke="#f3b829" strokeWidth="2.500" /></svg>
        </TaskIcon>
        <TaskButton aria-label="资源管理器">
          <svg width="34" height="32" viewBox="0 0 34 32"><path fill="#f4dc86" stroke="#c9a646" d="M2 4L11 2V5L22 3V7L32 5V27H2Z" /><path fill="#f9e9a8" d="M3 9H31V27H3Z" /><path fill="#27a53a" d="M5 3H8V5H5Z" /><path fill="#d8392b" d="M13 5H16V7H13Z" /><path fill="#2c7bd6" d="M22 7H25V9H22Z" /><path fill="#a8d8f1" stroke="#6aa9cf" d="M7 18H29V30H24V23H12V30H7Z" /></svg>
        </TaskButton>
        <TaskButton $active aria-label="浏览器窗口"><SwirlLogo size={32} blue="#4a90ea" /></TaskButton>
        <TaskButton aria-label="同步">
          <svg width="34" height="34" viewBox="0 0 34 34"><path fill="#b9e2f0" stroke="#f5fbfe" strokeWidth="1.500" d="M7 2H29V31H2V7Z" /><path fill="#1d3560" d="M7 7H11.500V17H17V22H7Z" /><path d="M14 23A8 7 0 0 1 29 19M29 24A8 7 0 0 1 15 28" fill="none" stroke="#8fb9cf" strokeWidth="5" /><path d="M14 23A8 7 0 0 1 29 19M29 24A8 7 0 0 1 15 28" fill="none" stroke="#fff" strokeWidth="3" /><rect x="23" y="23" width="10" height="10" fill="#36c511" stroke="#156d07" strokeWidth="1.500" /></svg>
        </TaskButton>
        <Tray>
          <svg width="16" height="17" viewBox="0 0 16 17"><path fill="#f04b1c" d="M1 2L14 0L16 14L2 17Z" /><path d="M12.500 5C7 2 2 6 7 8C14 9 11 14 4 11.500" fill="none" stroke="#fff" strokeWidth="2.500" /></svg>
          <svg width="16" height="17" viewBox="0 0 16 17"><circle cx="8" cy="8.500" r="7" fill="#1220a8" stroke="#bcc5dc" strokeWidth="1.500" /><path d="M5.500 6.500C5.500 3.500 10.500 3.500 10.500 6.500C10.500 8 8 8 8 10M8 11.500V13" fill="none" stroke="#fff" strokeWidth="1.800" /></svg>
          <svg width="9" height="22" viewBox="0 0 9 22" fill="none" stroke="#fff"><path d="M.5 3.500H5.500V7.500H.5ZM3 3V1.500H8.500V5.500H6" /><path fill="#fff" stroke="none" d="M1 13H8L4.500 16.500Z" /></svg>
          <svg width="14" height="6" viewBox="-4 0 14 6" fill="#fff"><path d="M0 5L4 0L8 5Z" /></svg>
          <svg width="17" height="15" viewBox="0 0 17 15"><ellipse cx="6.500" cy="6" rx="6.500" ry="5.500" fill="#7ed045" /><ellipse cx="11.500" cy="9.500" rx="5.300" ry="4.500" fill="#f0f3ef" /><circle cx="4.500" cy="4.500" r="1" fill="#285c20" /><circle cx="9" cy="4.500" r="1" fill="#285c20" /></svg>
          <svg width="16" height="16" viewBox="0 0 16 16" fill="none" stroke="#fff" strokeWidth="1.500"><path d="M6 3.500H15V11.500H4V8M9.500 12V14.500M6 14.800H13M1 0V4H5V0M3 4V8H5" /></svg>
          <svg width="15" height="15" viewBox="0 0 15 15" fill="none" stroke="#fff"><path fill="#fff" d="M.5 5H3L6.500 1.500V13.500L3 10H.5Z" /><path d="M9 5Q10.500 7.500 9 10M11 3.500Q13.500 7.500 11 11.500M13 2Q16 7.500 13 13" /></svg>
          <Clock dateTime="2017-11-29T16:16">16:16<br />2017/11/29</Clock>
        </Tray>
        <PeekButton aria-label="显示桌面" />
      </Taskbar>
    </>
  );
}

export default function App() {
  return (
    <Window>
      <Global />
      <BrowserChrome />
      <Viewport>
        <ForumPage />
        <ScrollTrack>
          <button aria-label="向上滚动"><svg width="7" height="4" viewBox="0 0 7 4"><path fill="#505050" d="M0 4H7L3.500 0Z" /></svg></button>
          <ScrollThumb />
          <button aria-label="向下滚动"><Caret c="#505050" /></button>
        </ScrollTrack>
      </Viewport>
      <Bars />
    </Window>
  );
}
